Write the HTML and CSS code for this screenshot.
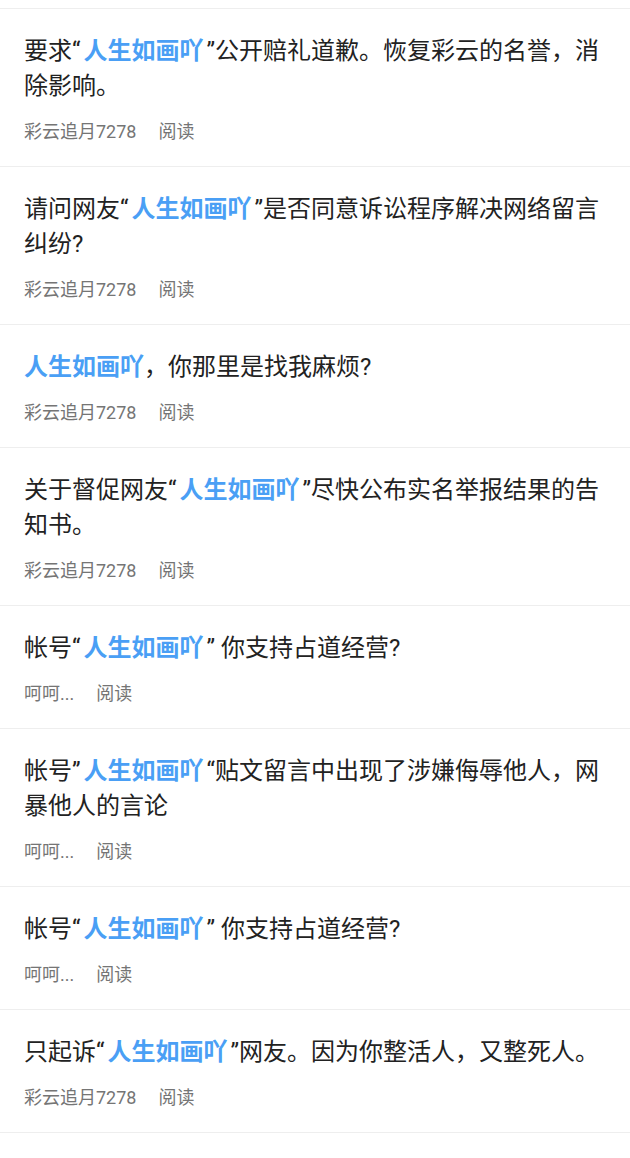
FILE: index.html
```html
<!DOCTYPE html>
<html lang="zh-CN">
<head>
<meta charset="utf-8">
<title>列表</title>
<link rel="stylesheet" href="styles.css">
</head>
<body>
<ul class="list">
  <li class="item">
    <p class="title">要求“<span class="hl">人生如画吖</span>”公开赔礼道歉。恢复彩云的名誉，消除影响。</p>
    <div class="meta"><span>彩云追月7278</span><span class="read">阅读</span></div>
  </li>
  <li class="item">
    <p class="title">请问网友“<span class="hl">人生如画吖</span>”是否同意诉讼程序解决网络留言纠纷?</p>
    <div class="meta"><span>彩云追月7278</span><span class="read">阅读</span></div>
  </li>
  <li class="item">
    <p class="title"><span class="hl hl-start">人生如画吖</span>，你那里是找我麻烦?</p>
    <div class="meta"><span>彩云追月7278</span><span class="read">阅读</span></div>
  </li>
  <li class="item">
    <p class="title">关于督促网友“<span class="hl">人生如画吖</span>”尽快公布实名举报结果的告知书。</p>
    <div class="meta"><span>彩云追月7278</span><span class="read">阅读</span></div>
  </li>
  <li class="item">
    <p class="title">帐号“<span class="hl">人生如画吖</span>” 你支持占道经营?</p>
    <div class="meta"><span>呵呵...</span><span class="read">阅读</span></div>
  </li>
  <li class="item">
    <p class="title">帐号”<span class="hl">人生如画吖</span>“贴文留言中出现了涉嫌侮辱他人，网暴他人的言论</p>
    <div class="meta"><span>呵呵...</span><span class="read">阅读</span></div>
  </li>
  <li class="item">
    <p class="title">帐号“<span class="hl">人生如画吖</span>” 你支持占道经营?</p>
    <div class="meta"><span>呵呵...</span><span class="read">阅读</span></div>
  </li>
  <li class="item">
    <p class="title">只起诉“<span class="hl">人生如画吖</span>”网友。因为你整活人，又整死人。</p>
    <div class="meta"><span>彩云追月7278</span><span class="read">阅读</span></div>
  </li>
</ul>
</body>
</html>
```
FILE: styles.css
```css
html, body {
  margin: 0;
  padding: 0;
  background: #ffffff;
}
body {
  font-family: Roboto, "Noto Sans CJK SC", sans-serif;
  color: #222222;
}
.list {
  list-style: none;
  margin: 8px 0 0 0;
  padding: 0;
  border-top: 1px solid #eeeeee;
}
.item {
  padding: 25px 24px 22px 24px;
  border-bottom: 1px solid #eeeeee;
}
.title {
  margin: 0;
  font-size: 24px;
  line-height: 35px;
  color: #222222;
}
.hl {
  color: #4a9ff5;
  font-weight: 700;
  padding: 0 3px;
}
.hl-start {
  padding: 0;
}
.meta {
  margin-top: 16px;
  font-size: 18px;
  line-height: 24px;
  color: #757575;
  display: flex;
}
.read {
  margin-left: 22px;
}
```
